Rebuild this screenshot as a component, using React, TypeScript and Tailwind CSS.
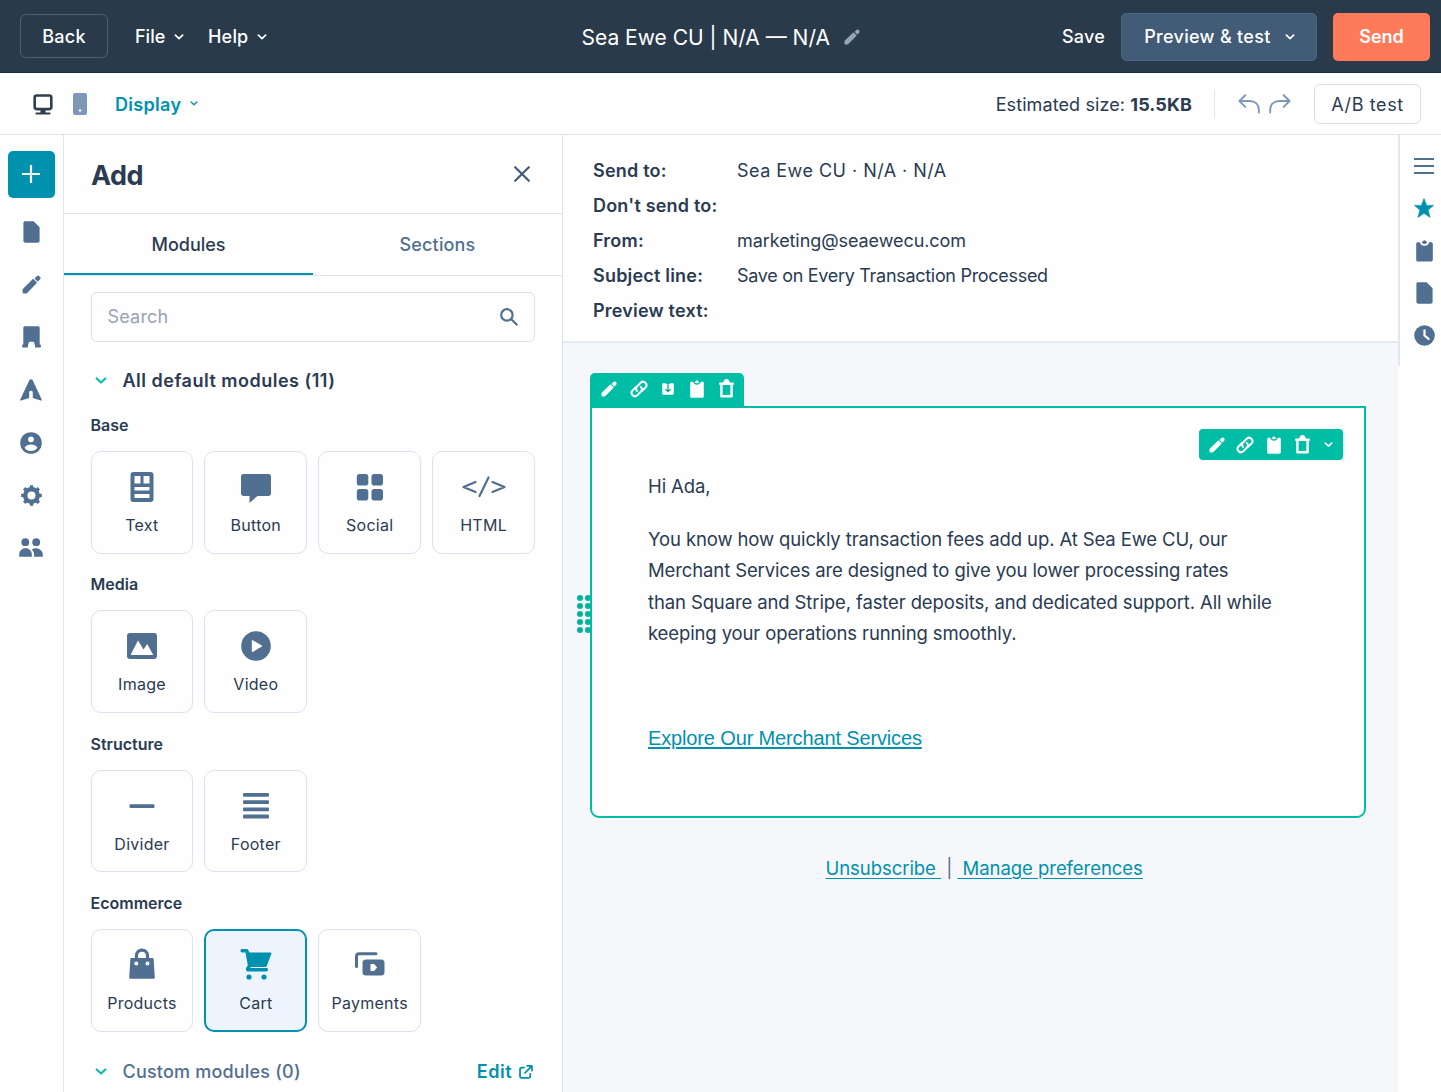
import type { ReactNode } from "react";
import clsx from "clsx";

// ─── Icons ───────────────────────────────────────────────────────────────────

type IconProps = { className?: string };

function Chevron({ className }: IconProps) {
  return (
    <svg viewBox="0 0 10 6" className={clsx("shrink-0", className)} fill="none" stroke="currentColor" strokeWidth="1.7" strokeLinecap="round" strokeLinejoin="round">
      <path d="M1.4 1.2 5 4.6l3.6-3.4" />
    </svg>
  );
}

function Pencil({ className }: IconProps) {
  return (
    <svg viewBox="0 0 20 20" className={clsx("shrink-0", className)} fill="currentColor">
      <path d="M.6 18.2v-2.5c0-.5.1-.8.5-1.2L11.2 4.6c.4-.4.8-.4 1.2 0l3 3c.4.4.4.8 0 1.2L5.4 18.9c-.3.3-.7.5-1.2.5H1.8c-.8 0-1.2-.4-1.2-1.2z" />
      <path d="m13.6 3.2 2-2c.9-.8 1.8-.8 2.6 0l.8.8c.8.8.8 1.7 0 2.6l-2 2c-.3.3-.6.3-.9 0l-2.5-2.5c-.3-.3-.3-.6 0-.9z" />
    </svg>
  );
}

function Monitor({ className }: IconProps) {
  return (
    <svg viewBox="0 0 20 21" className={className} fill="none" stroke="currentColor">
      <rect x="1.7" y="1.5" width="16.6" height="13.6" rx="2" strokeWidth="2.6" />
      <path d="M7.5 15.5h5v3.5h-5z" fill="currentColor" stroke="none" />
      <path d="M3.5 19.5h13" strokeWidth="2.2" strokeLinecap="round" />
    </svg>
  );
}

function Phone({ className }: IconProps) {
  return (
    <svg viewBox="0 0 14 22" className={className}>
      <rect width="14" height="22" rx="2" fill="currentColor" />
      <circle cx="7" cy="17.5" r="1.2" fill="#fff" />
    </svg>
  );
}

function Undo({ className }: IconProps) {
  return (
    <svg viewBox="0 0 22 20" className={className} fill="none" stroke="currentColor" strokeWidth="1.9" strokeLinecap="round" strokeLinejoin="round">
      <path d="M7.3 1.2 1.4 7l5.9 5.9M1.6 7h9.9c5.8 0 9.3 3.4 9.3 8.6v3" />
    </svg>
  );
}

function Page({ className }: IconProps) {
  return (
    <svg viewBox="0 0 17 22" className={className} fill="currentColor">
      <path d="M2 .3h8.6l6 6v13.4c0 1.3-.7 2-2 2H2.4c-1.300 0-2-.7-2-2V2C.4.9 1 .3 2 .3z" />
    </svg>
  );
}

function Building({ className }: IconProps) {
  return (
    <svg viewBox="0 0 19 22" className={className} fill="currentColor">
      <path d="M3 .3h13c1.100 0 1.700.6 1.700 1.700v16.500h.5c.4 0 .7.300.7.700v1.300c0 .6-.3.900-.9.900h-4.700l-.9-4.500c-.2-.8-.7-1.200-1.500-1.200H8.100c-.8 0-1.300.4-1.500 1.200l-.9 4.500H1c-.6 0-.9-.3-.9-.9v-1.300c0-.4.3-.7.700-.7h.5V2C1.300.900 1.900.3 3 .3z" />
    </svg>
  );
}

function Tent({ className }: IconProps) {
  return (
    <svg viewBox="0 0 22 22" className={className} fill="currentColor">
      <path d="M9.300 1.200c.7-1.400 2.700-1.400 3.400 0l9 19.300c.3.700-.2 1.200-.9.900l-8-2.400v-5.500c0-1-.5-1.700-1.800-1.700s-1.800.7-1.800 1.700V19l-8 2.400c-.7.300-1.200-.2-.9-.9z" />
    </svg>
  );
}

function Person({ className }: IconProps) {
  return (
    <svg viewBox="0 0 22 22" className={className}>
      <circle cx="11" cy="11" r="10.8" fill="currentColor" />
      <circle cx="11" cy="7.3" r="2.9" fill="#fff" />
      <path d="M4.600 15.800c1.300-2.200 3.800-3.300 6.400-3.300s5.100 1.100 6.400 3.300c-1.400 2.200-3.800 3.300-6.400 3.300s-5-1.100-6.400-3.300z" fill="#fff" />
    </svg>
  );
}

function Gear({ className }: IconProps) {
  return (
    <svg viewBox="0 0 22 22" className={className} fill="none" stroke="currentColor">
      <circle cx="11" cy="11" r="6.5" strokeWidth="4.6" />
      {[0, 45, 90, 135].map((deg) => (
        <path key={deg} d="M11 .2v4M11 17.8v4" strokeWidth="3.6" transform={`rotate(${deg} 11 11)`} />
      ))}
    </svg>
  );
}

function People({ className }: IconProps) {
  return (
    <svg viewBox="0 0 24 19" className={className} fill="currentColor">
      <circle cx="6.3" cy="4.2" r="3.9" />
      <circle cx="17.2" cy="4.2" r="3.9" />
      <path d="M.2 18.700v-2c0-3.800 2.700-6.400 6.300-6.400s6.300 2.600 6.300 6.400v2z" />
      <path d="M12.800 11.400c4.500-2.700 11 0 11 5.500v1.800h-8.700v-2c0-2-.8-3.900-2.300-5.300z" />
    </svg>
  );
}

function Link({ className }: IconProps) {
  return (
    <svg viewBox="0 0 20 20" className={className} fill="none" stroke="currentColor" strokeWidth="2.2" strokeLinecap="round">
      <path d="M8 12.300a3.800 3.800 0 0 1 0-5.300l3.900-4a3.750 3.750 0 0 1 5.300 5.300l-3.600 3.600" />
      <path d="M12 7.700a3.800 3.800 0 0 1 0 5.300l-3.900 4a3.750 3.750 0 0 1-5.300-5.300l3.600-3.600" />
    </svg>
  );
}

function SaveBox({ className }: IconProps) {
  return (
    <svg viewBox="0 0 12 12" className={className}>
      <path d="M1.500.3h2.700v1h3.600v-1h2.700c.8 0 1.300.5 1.300 1.300v8.900c0 .8-.5 1.300-1.300 1.300h-9c-.8 0-1.300-.5-1.300-1.300V1.600C.2.800.7.300 1.500.3z" fill="currentColor" />
      <path d="M6 1.500v7M3.600 6.300 6 8.700l2.400-2.400" fill="none" stroke="#00a88f" strokeWidth="1.3" />
    </svg>
  );
}

function Clipboard({ className }: IconProps) {
  return (
    <svg viewBox="0 0 17 22" className={className} fill="currentColor">
      <path d="M2 2.200h1.800c.7 2.400 2.200 3.600 4.700 3.600s4-1.200 4.700-3.600H15c1.200 0 1.800.6 1.800 1.800v15.800c0 1.200-.6 1.800-1.800 1.800H2c-1.200 0-1.800-.6-1.800-1.800V4c0-1.200.6-1.800 1.800-1.800z" />
      <path d="M5.700 2.300C6.400 1.700 7 1.600 7.200 1.100c.4-1 2.200-1 2.600 0 .2.500.8.600 1.500 1.200C10.600 3.500 9.700 4 8.500 4s-2.100-.5-2.800-1.700z" />
    </svg>
  );
}

function Trash({ className }: IconProps) {
  return (
    <svg viewBox="0 0 15 19" className={className} fill="none" stroke="currentColor">
      <path d="M2.4 5.500v11.800h10.200V5.500" strokeWidth="2.5" strokeLinejoin="round" />
      <path d="M1.3 4.700h12.400" strokeWidth="2.6" strokeLinecap="round" />
      <path d="M4.300 4c0-2.200 1.200-3.900 3.200-3.900s3.200 1.700 3.200 3.900z" fill="currentColor" stroke="none" />
    </svg>
  );
}

function Star({ className }: IconProps) {
  return (
    <svg viewBox="0 0 20 20" className={className} fill="currentColor" stroke="currentColor" strokeWidth=".6" strokeLinejoin="round">
      <path d="m10 .5 2.600 6.900h7l-5.500 4.500 2 7.500L10 15.300l-6.100 4.100 2-7.500L.4 7.400h7z" />
    </svg>
  );
}

function Clock({ className }: IconProps) {
  return (
    <svg viewBox="0 0 22 22" className={className}>
      <circle cx="11" cy="11" r="10.8" fill="currentColor" />
      <path d="M11 5.500V11l4.300 3.600" fill="none" stroke="#fff" strokeWidth="2.3" strokeLinecap="round" />
    </svg>
  );
}

// ─── Module tile icons, all on a 44x34 canvas ────────────────────────────────

function Tile({ children }: { children: ReactNode }) {
  return (
    <svg viewBox="0 0 44 34" className="h-[34px] w-11" fill="currentColor">
      {children}
    </svg>
  );
}

const textIcon = (
  <Tile>
    <rect x="10.5" y="2" width="23" height="30" rx="3" />
    <path d="M14.500 6h6v7.500h-6zM23.500 6h6v7.500h-6zM14.500 17h15v3.500h-15zM14.500 24h15v4h-15z" fill="#fff" />
  </Tile>
);
const buttonIcon = (
  <Tile>
    <path d="M9.500 4h25c1.500 0 2.500 1 2.500 2.500v17c0 1.500-1 2.500-2.500 2.500h-11L15.500 33v-7h-6C8 26 7 25 7 23.500v-17C7 5 8 4 9.500 4z" />
  </Tile>
);
const socialIcon = (
  <Tile>
    <rect x="8.8" y="4" width="11.5" height="11.5" rx="2.8" />
    <rect x="23.5" y="4" width="11.5" height="11.5" rx="2.8" />
    <rect x="8.8" y="19" width="11.5" height="11.5" rx="2.8" />
    <rect x="23.5" y="19" width="11.5" height="11.5" rx="2.8" />
  </Tile>
);
const htmlIcon = (
  <Tile>
    <path d="M13.500 12 1.500 17l12 5M30.500 12l12 5-12 5M26.500 7.500 17.500 26" fill="none" stroke="currentColor" strokeWidth="2.2" strokeLinecap="round" strokeLinejoin="round" />
  </Tile>
);
const imageIcon = (
  <Tile>
    <rect x="7" y="4" width="30" height="26" rx="3" />
    <path d="m11 25 7-13.500 5.500 9L27.200 15 33 25.500v.5H11z" fill="#fff" />
  </Tile>
);
const videoIcon = (
  <Tile>
    <circle cx="22" cy="17" r="14.800" />
    <path d="m18.300 11.500 9.500 5.500-9.500 5.700z" fill="#fff" stroke="#fff" strokeLinejoin="round" />
  </Tile>
);
const dividerIcon = (
  <Tile>
    <rect x="9.5" y="15.2" width="25" height="3.8" rx="1.2" />
  </Tile>
);
const footerIcon = (
  <Tile>
    {[4, 11.2, 18.4, 25.6].map((y) => (
      <rect key={y} x="9" y={y} width="26" height="3.8" rx="1.2" />
    ))}
  </Tile>
);
const productsIcon = (
  <Tile>
    <path d="M16.500 11.500V7.600a5.500 5.500 0 0 1 11 0v3.900" fill="none" stroke="currentColor" strokeWidth="3.2" />
    <path d="M11.500 10h21c.7 0 1 .3 1.100 1l1.200 18.200c.1 1-.4 1.600-1.400 1.600H10.600c-1 0-1.500-.6-1.400-1.600L10.400 11c.1-.7.4-1 1.100-1z" />
    <circle cx="16.3" cy="15.5" r="2" fill="#fff" />
    <circle cx="27.5" cy="15.5" r="2" fill="#fff" />
  </Tile>
);
const cartIcon = (
  <Tile>
    <path d="M8 1h4.500c1 0 1.500.4 1.900 1.300l.9 2.200h21c1 0 1.300.7 1 1.500l-4.500 11.800c-.3.900-.9 1.300-1.900 1.300H16.500v1h16c1 0 1.500.7 1.500 1.700s-.5 1.700-1.500 1.700H14.800c-2.600 0-3.500-1.800-2.500-3.900l1.500-2.200L11.500 4.500H8c-1 0-1.500-.7-1.500-1.700S7 1 8 1z" />
    <circle cx="15" cy="29" r="2.6" />
    <circle cx="30" cy="29" r="2.6" />
  </Tile>
);
const paymentsIcon = (
  <Tile>
    <path d="M8.500 18.500V8.500c0-1.700.9-2.700 2.700-2.700H28" fill="none" stroke="currentColor" strokeWidth="3" strokeLinecap="round" />
    <rect x="14.5" y="11.500" width="22" height="16" rx="3.5" />
    <path d="M22.500 16h3.600l3 3.500-3 3.500h-3.600z" fill="#fff" />
  </Tile>
);

const groups = [
  {
    title: "Base",
    modules: [
      { label: "Text", icon: textIcon },
      { label: "Button", icon: buttonIcon },
      { label: "Social", icon: socialIcon },
      { label: "HTML", icon: htmlIcon },
    ],
  },
  {
    title: "Media",
    modules: [
      { label: "Image", icon: imageIcon },
      { label: "Video", icon: videoIcon },
    ],
  },
  {
    title: "Structure",
    modules: [
      { label: "Divider", icon: dividerIcon },
      { label: "Footer", icon: footerIcon },
    ],
  },
  {
    title: "Ecommerce",
    modules: [
      { label: "Products", icon: productsIcon },
      { label: "Cart", icon: cartIcon, active: true },
      { label: "Payments", icon: paymentsIcon },
    ],
  },
];

const details = [
  { label: "Send to:", value: "Sea Ewe CU · N/A · N/A", tracking: "tracking-[0.47px]" },
  { label: "Don't send to:", value: "" },
  { label: "From:", value: "marketing@seaewecu.com", tracking: "tracking-[-0.07px]" },
  { label: "Subject line:", value: "Save on Every Transaction Processed", tracking: "tracking-[-0.3px]" },
  { label: "Preview text:", value: "" },
];

// ─── Sections ────────────────────────────────────────────────────────────────

function TopBar() {
  return (
    <header className="flex h-[73px] shrink-0 items-center border-b border-[#1c2c3e] bg-[#293a4b] pt-px pr-[11px] pl-5 text-lg font-medium text-white">
      <button className="mb-px h-11 w-22 rounded-md border border-[#52606e] pt-px tracking-[0.3px]">Back</button>
      <button className="ml-[27px] flex w-[73px] items-center gap-[9px] pt-px">
        File <Chevron className="w-2.5" />
      </button>
      <button className="flex items-center gap-[9px] pt-px tracking-[0.2px]">
        Help <Chevron className="w-2.5" />
      </button>
      <h1 className="ml-[314px] flex w-[480px] items-center gap-3.5 pt-[3px] text-[21px] font-normal whitespace-nowrap">
        Sea Ewe CU | N/A — N/A
        <Pencil className="mb-0.5 size-4 text-[#9aa3b0]" />
      </h1>
      <button className="w-[44px] pt-px tracking-[0.2px]">Save</button>
      <button className="ml-4 flex h-12 w-[196px] items-center justify-center gap-3.5 rounded-[5px] border border-[#4a6684] bg-[#425b76] tracking-[0.3px]">
        Preview &amp; test <Chevron className="w-2.5" />
      </button>
      <button className="ml-auto h-12 w-[97px] rounded-[5px] bg-[#ff7a59] font-semibold">Send</button>
    </header>
  );
}

function ViewBar() {
  return (
    <div className="flex h-[62px] shrink-0 items-center border-b border-[#dfe5ee] pr-5 pl-[33px] text-lg">
      <Monitor className="mt-px h-[21px] w-5 text-[#2d3e50]" />
      <Phone className="ml-5 h-[22px] w-3.5 text-[#7c98b6]" />
      <button className="ml-7 flex items-center gap-[9px] pt-0.5 font-semibold tracking-[0.3px] text-[#0091ae]">
        Display <Chevron className="mb-0.5 w-2" />
      </button>
      <div className="ml-auto pt-0.5 tracking-[0.1px] whitespace-nowrap">
        Estimated size: <span className="font-bold">15.5KB</span>
      </div>
      <div className="ml-[22px] h-7 w-px bg-[#dfe5ee]" />
      <Undo className="ml-[23px] h-5 w-[22px] text-[#7c98b6]" />
      <Undo className="ml-[9px] h-5 w-[22px] -scale-x-100 text-[#7c98b6]" />
      <button className="ml-[23px] h-10 w-[107px] rounded-md border border-[#d5deea] pt-0.5 tracking-[0.6px]">A/B test</button>
    </div>
  );
}

function LeftRail() {
  const items = [
    <Page className="h-[22px] w-[17px]" />,
    <Pencil className="size-[19px]" />,
    <Building className="h-[22px] w-[19px]" />,
    <Tent className="size-[22px]" />,
    <Person className="size-[22px]" />,
    <Gear className="size-[21px]" />,
    <People className="h-[19px] w-6" />,
  ];
  return (
    <nav className="flex w-16 shrink-0 flex-col items-center border-r border-[#dfe5ee] pt-[15.5px] pr-px text-[#516f90]">
      <button className="mb-2 flex size-[47px] items-center justify-center rounded-[5px] bg-[#0091ae] text-white">
        <svg viewBox="0 0 18 18" className="size-[18px]" stroke="currentColor" strokeWidth="2.2">
          <path d="M9 0v18M0 9h18" />
        </svg>
      </button>
      {items.map((icon, i) => (
        <div key={i} className="flex h-[52.7px] w-full items-center justify-center">
          {icon}
        </div>
      ))}
    </nav>
  );
}

function ModulePanel() {
  return (
    <aside className="flex w-[499px] shrink-0 flex-col border-r border-[#dfe5ee]">
      <div className="flex h-[79px] shrink-0 items-center justify-between border-b border-[#dfe5ee] pr-8 pl-[27px]">
        <h2 className="pt-1 text-[27px] font-bold tracking-[-0.5px]">Add</h2>
        <svg viewBox="0 0 16 16" className="size-4 text-[#425b76]" stroke="currentColor" strokeWidth="2.2" strokeLinecap="round">
          <path d="m1.200 1.200 13.600 13.600M14.800 1.200 1.200 14.800" />
        </svg>
      </div>

      <div className="flex h-[62px] shrink-0 border-b border-[#dfe5ee] text-lg font-medium">
        <button className="w-[249px] border-b-2 border-[#0091ae] pt-0.5">Modules</button>
        <button className="flex-1 tracking-[0.15px] text-[#516f90]">Sections</button>
      </div>

      <div className="pt-4 pr-[27px] pl-[26.5px]">
        <div className="flex h-[50px] items-center justify-between rounded-md border border-[#d9e2ed] pr-4 pl-4 text-lg tracking-[0.2px] text-[#98a3b5]">
          Search
          <svg viewBox="0 0 18 18" className="size-[18px] text-[#516f90]" fill="none" stroke="currentColor" strokeWidth="2.2" strokeLinecap="round">
            <circle cx="6.9" cy="6.9" r="5.7" />
            <path d="m11.300 11.300 5.400 5.200" />
          </svg>
        </div>

        <div className="mt-6 flex h-[30px] items-center gap-4 pl-1 text-lg font-semibold tracking-[0.5px]">
          <Chevron className="w-3 text-[#00bda5]" />
          All default modules (11)
        </div>

        {groups.map((group) => (
          <section key={group.title} className="h-[159.4px] pt-[17px]">
            <h3 className="text-base leading-6 font-semibold">{group.title}</h3>
            <div className="mt-3.5 grid grid-cols-4 gap-[11px]">
              {group.modules.map((m) => (
                <button
                  key={m.label}
                  className={clsx(
                    "flex h-[102.5px] flex-col items-center rounded-[10px] text-base tracking-[0.25px]",
                    m.active ? "border-2 border-[#0091ae] bg-[#edf4fd] pt-[17px]" : "border border-[#dbe3ee] pt-[18px]",
                  )}
                >
                  <span className={m.active ? "text-[#0091ae]" : "text-[#516f90]"}>{m.icon}</span>
                  <span className="mt-[9px]">{m.label}</span>
                </button>
              ))}
            </div>
          </section>
        ))}

        <div className="mt-[17px] flex h-[42px] items-center pl-1 text-lg font-medium tracking-[0.2px] text-[#516f90]">
          <Chevron className="mr-4 w-3 text-[#00bda5]" />
          Custom modules (0)
          <a className="mr-0.5 ml-auto flex items-center gap-[7px] font-semibold tracking-[0.5px] text-[#0091ae]">
            Edit
            <svg viewBox="0 0 15 15" className="size-[14px]" fill="none" stroke="currentColor" strokeWidth="1.9" strokeLinecap="round" strokeLinejoin="round">
              <path d="M5.500 2.700H3c-1.200 0-1.900.7-1.900 1.900v7.200c0 1.200.7 1.900 1.900 1.900h7.200c1.200 0 1.900-.7 1.900-1.900V9.500M8.800 1h5v5M13.500 1.300 6.500 8.500" />
            </svg>
          </a>
        </div>
      </div>
    </aside>
  );
}

function EmailCanvas() {
  return (
    <main className="flex w-[835px] shrink-0 flex-col bg-[#f5f7fa]">
      <dl className="h-[208px] shrink-0 border-b-2 border-[#e4eaf1] bg-[#fefefe] pt-[19px] pl-[30px] text-lg">
        {details.map((row) => (
          <div key={row.label} className="flex h-[34.8px] items-center">
            <dt className="w-36 font-semibold tracking-[0.2px] whitespace-nowrap">{row.label}</dt>
            <dd className={row.tracking}>{row.value}</dd>
          </div>
        ))}
      </dl>

      <div className="mt-[30px] ml-[27px] w-[776px]">
        <div className="flex h-[33px] w-[154px] items-center rounded-t-[5px] bg-[#00bda5] pb-0.5 pl-[11px] text-white">
          <Pencil className="size-4" />
          <Link className="ml-[13px] size-[18px]" />
          <SaveBox className="ml-3.5 size-3" />
          <Clipboard className="ml-4 h-[18px] w-3.5" />
          <Trash className="ml-[15px] h-[19px] w-[15px]" />
        </div>
        <article className="relative h-[412px] rounded-b-[9px] border-2 border-[#00bda5] bg-[#fefefe] pl-14">
          {/* drag handle */}
          <div className="absolute top-[187px] -left-[15px] grid grid-cols-2 gap-0.5">
            {Array.from({ length: 10 }, (_, i) => (
              <span key={i} className="size-1.5 rounded-full bg-[#00b59e]" />
            ))}
          </div>
          {/* module actions */}
          <div className="absolute top-[21px] right-[21px] flex h-[31px] w-[144px] items-center rounded-[4px] bg-[#00bda5] pl-2.5 text-white">
            <Pencil className="size-4" />
            <Link className="ml-[11px] size-[18px]" />
            <Clipboard className="ml-[13px] h-[18px] w-3.5" />
            <Trash className="ml-3.5 h-[19px] w-[15px]" />
            <Chevron className="ml-3.5 w-[9px]" />
          </div>

          <div className="pt-[63px] text-[18.5px] leading-[31.2px] tracking-[-0.12px] whitespace-nowrap">
            <p>Hi Ada,</p>
            <p className="mt-[22px]">
              You know how quickly transaction fees add up. At Sea Ewe CU, our
              <br />
              Merchant Services are designed to give you lower processing rates
              <br />
              than Square and Stripe, faster deposits, and dedicated support. All while
              <br />
              keeping your operations running smoothly.
            </p>
          </div>
          <a className="mt-[73px] block font-['Liberation_Sans',sans-serif] text-[20px] leading-8 tracking-[-0.14px] text-[#0091ae] underline underline-offset-2">
            Explore Our Merchant Services
          </a>
        </article>
      </div>

      <footer className="mt-[34px] pl-[262.5px] text-[18.5px] leading-8 tracking-[-0.05px] whitespace-pre text-[#516f90]">
        <a className="text-[#0091ae] underline underline-offset-3">Unsubscribe </a>
        {" | "}
        <a className="text-[#0091ae] underline underline-offset-3"> Manage preferences</a>
      </footer>
    </main>
  );
}

function RightRail() {
  return (
    <div className="w-[43px] shrink-0">
      <div className="flex h-[231px] flex-col items-center border-l-2 border-[#e1e8f0] pt-2.5 pl-[7px] text-[#516f90]">
        <div className="flex h-[42.3px] items-center">
          <svg viewBox="0 0 20 16" className="h-4 w-5" stroke="currentColor" strokeWidth="1.8">
            <path d="M0 1h20M0 8h20M0 15h20" />
          </svg>
        </div>
        <div className="flex h-[42.3px] items-center">
          <Star className="size-5 text-[#0091ae]" />
        </div>
        <div className="flex h-[42.3px] items-center">
          <Clipboard className="h-[22px] w-[17px]" />
        </div>
        <div className="flex h-[42.3px] items-center">
          <Page className="h-[22px] w-[17px]" />
        </div>
        <div className="flex h-[42.3px] items-center">
          <Clock className="size-[21px]" />
        </div>
      </div>
    </div>
  );
}

export default function App() {
  return (
    <div className="flex h-[1092px] w-[1441px] flex-col overflow-hidden bg-[#fefefe] font-[Inter,sans-serif] text-[#2a3b52]">
      <TopBar />
      <ViewBar />
      <div className="flex min-h-0 flex-1">
        <LeftRail />
        <ModulePanel />
        <EmailCanvas />
        <RightRail />
      </div>
    </div>
  );
}
